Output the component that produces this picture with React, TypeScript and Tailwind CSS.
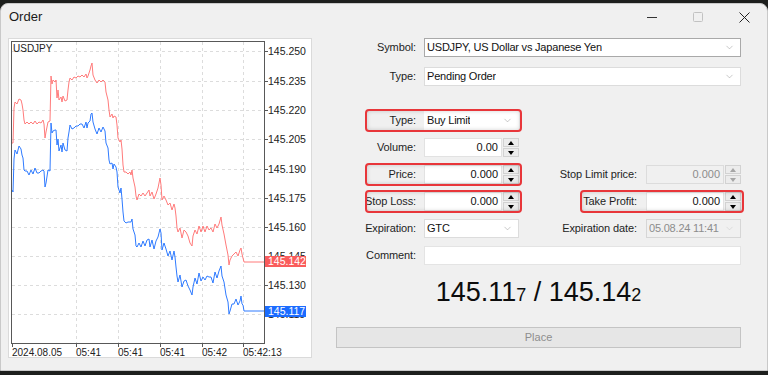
import type { ReactNode } from "react";
import { ChevronDown } from "lucide-react";

const RED: [number, number][] = [
  [12, 143], [13, 143], [14, 108], [15, 102], [17, 104], [19, 99], [21, 100], [22, 104], [23, 110],
  [24, 120], [25, 124], [27, 122], [29, 124], [31, 122], [33, 124], [35, 121], [37, 124], [39, 122],
  [41, 123], [43, 120], [44, 124], [45, 138], [46, 132], [48, 122], [50, 121], [51, 76], [52, 84],
  [53, 80], [55, 82], [56, 80], [57, 98], [58, 90], [59, 100], [61, 97], [62, 102], [63, 96],
  [65, 101], [67, 100], [68, 90], [69, 82], [70, 78], [72, 80], [74, 77], [76, 78], [78, 76],
  [80, 77], [82, 75], [84, 77], [86, 74], [87, 78], [88, 76], [89, 73], [90, 70], [91, 66],
  [92, 63], [93, 75], [95, 80], [97, 83], [99, 80], [101, 82], [103, 80], [105, 82], [106, 92],
  [108, 100], [109, 110], [110, 117], [112, 114], [113, 118], [114, 116], [116, 117], [117, 125],
  [118, 138], [120, 142], [121, 140], [122, 149], [123, 165], [124, 172], [126, 172], [128, 174],
  [130, 172], [131, 175], [132, 170], [133, 178], [135, 187], [136, 196], [137, 200], [139, 194],
  [141, 196], [143, 193], [145, 196], [147, 193], [149, 190], [150, 196], [152, 192], [154, 199],
  [156, 194], [158, 188], [160, 178], [161, 185], [162, 200], [164, 196], [166, 200], [168, 205],
  [170, 203], [172, 210], [174, 204], [175, 208], [176, 216], [177, 228], [178, 232], [180, 228],
  [182, 238], [184, 230], [186, 232], [188, 236], [190, 243], [192, 246], [193, 236], [195, 230],
  [197, 234], [199, 226], [201, 232], [203, 226], [205, 232], [207, 226], [209, 230], [211, 228],
  [213, 232], [215, 224], [217, 228], [219, 224], [221, 217], [222, 225], [224, 234], [226, 245],
  [228, 255], [229, 265], [230, 260], [232, 256], [234, 254], [236, 252], [238, 256], [240, 250],
  [241, 248], [242, 254], [243, 258], [244, 262], [265, 262],
];

const BLUE: [number, number][] = RED.map(([x, y], i) => {
  const last = i === RED.length - 1 || x >= 244;
  const jitter = last ? 0 : ((i * 7) % 5) - 2;
  return [x, y + 49 + jitter];
});

const toPath = (pts: [number, number][]) =>
  pts.map(([x, y], i) => `${i ? "L" : "M"}${x} ${y}`).join(" ");

const LEVELS = [
  ["145.250", 51], ["145.235", 81], ["145.220", 110], ["145.205", 139], ["145.190", 169],
  ["145.175", 198], ["145.160", 227], ["145.145", 256], ["145.130", 285], ["145.115", 314],
] as const;

const TIMES = [
  ["2024.08.05", 12], ["05:41", 76], ["05:41", 118], ["05:41", 160], ["05:42", 202], ["05:42:13", 243],
] as const;

function Chart() {
  return (
    <svg width="304" height="320" viewBox="8 38 304 320" className="block shrink-0">
      <rect x="8.5" y="38.5" width="303" height="319" fill="#fff" stroke="#dadada" />
      {LEVELS.map(([, y]) => (
        <line key={y} x1="12" x2="264" y1={y + 0.5} y2={y + 0.5} stroke="#dcdcdc" strokeDasharray="3 3" />
      ))}
      {TIMES.slice(1).map(([, x], i) => (
        <line key={i} x1={x + 0.5} x2={x + 0.5} y1="42" y2="343" stroke="#dcdcdc" strokeDasharray="3 3" />
      ))}
      <defs>
        <clipPath id="plot">
          <rect x="12" y="42" width="252" height="301" />
        </clipPath>
      </defs>
      <g clipPath="url(#plot)" fill="none" strokeWidth="1" strokeLinejoin="round">
        <path d={toPath(RED)} stroke="#ff7b7b" />
        <path d={toPath(BLUE)} stroke="#2f7bff" />
      </g>
      <rect x="11.5" y="41.5" width="253" height="302" fill="none" stroke="#585858" />
      <text x="13" y="52" fontSize="10" fill="#222">USDJPY</text>
      {LEVELS.map(([t, y]) => (
        <g key={t}>
          <line x1="265" x2="268" y1={y + 0.5} y2={y + 0.5} stroke="#585858" />
          <text x="268" y={y + 4} fontSize="10.5" fill="#222">{t}</text>
        </g>
      ))}
      {TIMES.map(([t, x], i) => (
        <g key={i}>
          <line x1={x + 0.5} x2={x + 0.5} y1="344" y2="347" stroke="#585858" />
          <text x={x} y="356" fontSize="10" fill="#222">{t}</text>
        </g>
      ))}
      <rect x="265" y="256" width="41" height="11" fill="#fa5c5c" />
      <text x="268" y="265" fontSize="10.5" fill="#fff">145.142</text>
      <rect x="265" y="306" width="41" height="11" fill="#1b6cff" />
      <text x="268" y="315" fontSize="10.5" fill="#fff">145.117</text>
    </svg>
  );
}

function Label({ children, className = "" }: { children: ReactNode; className?: string }) {
  return (
    <div className={`shrink-0 text-right text-[11px] tracking-[-0.1px] text-[#1e1e1e] ${className}`}>
      {children}
    </div>
  );
}

function Select({
  children,
  className = "",
  disabled = false,
}: {
  children: ReactNode;
  className?: string;
  disabled?: boolean;
}) {
  return (
    <div
      className={`flex h-[19px] items-center border pl-[2px] pr-[5px] text-[11px] tracking-[-0.2px] ${
        disabled ? "bg-[#f0f0f0] text-[#8c8c8c]" : "bg-white text-[#111]"
      } ${className}`}
    >
      <span className="truncate">{children}</span>
      <ChevronDown size={11} strokeWidth={1} className={`ml-auto shrink-0 ${disabled ? "text-[#c4c4c4]" : "text-[#8a8a8a]"}`} />
    </div>
  );
}

function Spin({ disabled = false }: { disabled?: boolean }) {
  const color = disabled ? "border-b-[#a6a6a6]" : "border-b-black";
  const colorDown = disabled ? "border-t-[#a6a6a6]" : "border-t-black";
  return (
    <div className="ml-[1px] flex h-[19px] w-[16px] shrink-0 flex-col gap-[1px]">
      <div className="flex flex-1 items-center justify-center border border-[#d2d2d2] bg-[#ececec]">
        <span className={`h-0 w-0 border-x-[3.5px] border-b-[4px] border-x-transparent ${color}`} />
      </div>
      <div className="flex flex-1 items-center justify-center border border-[#d2d2d2] bg-[#ececec]">
        <span className={`h-0 w-0 border-x-[3.5px] border-t-[4px] border-x-transparent ${colorDown}`} />
      </div>
    </div>
  );
}

function NumInput({
  value,
  width,
  disabled = false,
}: {
  value: string;
  width: string;
  disabled?: boolean;
}) {
  return (
    <div className="flex items-center">
      <div
        className={`flex h-[19px] items-center justify-end border pr-[3px] text-[11px] ${width} ${
          disabled ? "border-[#dcdcdc] bg-[#f0f0f0] text-[#8c8c8c]" : "border-[#e2e2e2] bg-white text-[#111]"
        }`}
      >
        {value}
      </div>
      <Spin disabled={disabled} />
    </div>
  );
}

function Mark({ className }: { className: string }) {
  return (
    <div
      className={`pointer-events-none absolute -top-[2px] h-[23px] rounded-[4px] border-2 border-[#e8363a] shadow-[inset_0_0_4px_rgba(0,0,0,0.18)] ${className}`}
    />
  );
}

export default function App() {
  return (
    <div className="flex h-[375px] w-[768px] flex-col overflow-hidden bg-[#1d1f1d] font-['Liberation_Sans',Arial,sans-serif]">
      <div className="h-[3px] shrink-0" />
      <div className="flex h-[368px] shrink-0 flex-col rounded-t-[8px] border border-[#c9c9c9] bg-[#f0f0f0]">
        {/* title bar */}
        <div className="flex h-[26px] shrink-0 items-center">
          <span className="pl-[8px] text-[13px] text-[#1a1a1a]">Order</span>
          <div className="ml-auto flex h-full">
            <div className="flex w-[46px] items-center justify-center">
              <svg width="10" height="10" viewBox="0 0 10 10">
                <line x1="0" x2="10" y1="5.5" y2="5.5" stroke="#333" />
              </svg>
            </div>
            <div className="flex w-[46px] items-center justify-center">
              <svg width="10" height="10" viewBox="0 0 10 10">
                <rect x="0.5" y="0.5" width="9" height="9" rx="1" fill="none" stroke="#c2c2c2" />
              </svg>
            </div>
            <div className="flex w-[46px] items-center justify-center">
              <svg width="11" height="11" viewBox="0 0 11 11">
                <path d="M0.5 0.5 L10.5 10.5 M10.5 0.5 L0.5 10.5" stroke="#222" strokeWidth="1" />
              </svg>
            </div>
          </div>
        </div>

        <div className="flex flex-1">
          <div className="ml-[7px] mt-[8px]">
            <Chart />
          </div>

          <div className="ml-[24px] flex w-[405px] flex-col">
            <div className="mt-[8px] flex items-center">
              <Label className="mr-[8px] w-[80px]">Symbol:</Label>
              <Select className="w-[317px] border-[#a9a9a9]">USDJPY, US Dollar vs Japanese Yen</Select>
            </div>
            <div className="mt-[10px] flex items-center">
              <Label className="mr-[8px] w-[80px]">Type:</Label>
              <Select className="w-[317px] border-[#dcdcdc]">Pending Order</Select>
            </div>

            <div className="relative mt-[25px] flex items-center">
              <Mark className="left-[29px] w-[157px]" />
              <Label className="mr-[8px] w-[80px]">Type:</Label>
              <Select className="w-[95px] border-white">Buy Limit</Select>
            </div>
            <div className="mt-[8px] flex items-center">
              <Label className="mr-[8px] w-[80px]">Volume:</Label>
              <NumInput value="0.00" width="w-[78px]" />
            </div>
            <div className="relative mt-[8px] flex items-center">
              <Mark className="left-[29px] w-[157px]" />
              <Label className="mr-[8px] w-[80px]">Price:</Label>
              <NumInput value="0.000" width="w-[78px]" />
              <Label className="mr-[9px] flex-1">Stop Limit price:</Label>
              <NumInput value="0.000" width="w-[78px]" disabled />
            </div>
            <div className="relative mt-[8px] flex items-center">
              <Mark className="left-[29px] w-[157px]" />
              <Mark className="left-[244px] w-[164px]" />
              <Label className="mr-[8px] w-[80px]">Stop Loss:</Label>
              <NumInput value="0.000" width="w-[78px]" />
              <Label className="mr-[9px] flex-1">Take Profit:</Label>
              <NumInput value="0.000" width="w-[78px]" />
            </div>
            <div className="mt-[8px] flex items-center">
              <Label className="mr-[8px] w-[80px]">Expiration:</Label>
              <Select className="w-[95px] border-[#dcdcdc]">GTC</Select>
              <Label className="mr-[9px] flex-1">Expiration date:</Label>
              <Select className="w-[95px] border-[#d6d6d6]" disabled>
                05.08.24 11:41
              </Select>
            </div>
            <div className="mt-[8px] flex items-center">
              <Label className="mr-[8px] w-[80px]">Comment:</Label>
              <div className="h-[19px] w-[317px] border border-[#e4e4e4] bg-white" />
            </div>

            <div className="mt-[14px] flex h-[29px] items-baseline justify-center text-[27px] leading-none text-[#0c0c0c]">
              <span>145.11</span>
              <span className="text-[18px]">7</span>
              <span className="whitespace-pre"> / 145.14</span>
              <span className="text-[18px]">2</span>
            </div>

            <div className="mt-[19px] flex h-[21px] items-center justify-center border border-[#c4c4c4] bg-[#e6e6e6] text-[11px] text-[#8e8e8e]">
              Place
            </div>
          </div>
        </div>
      </div>
    </div>
  );
}
